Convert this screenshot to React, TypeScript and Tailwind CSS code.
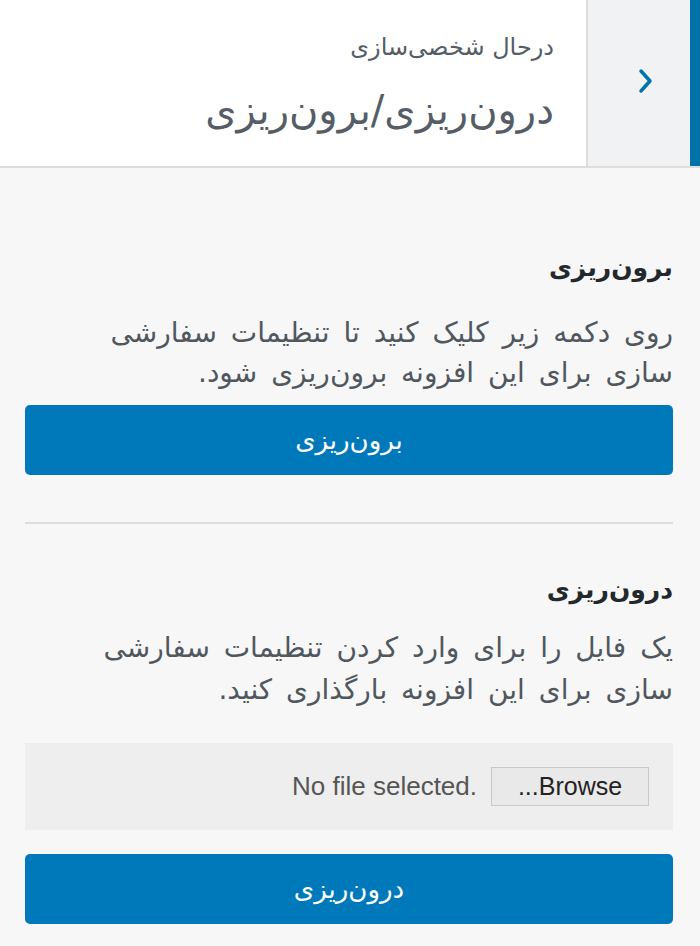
import React from "react";

const fa = { fontFamily: '"DejaVu Sans", "Noto Sans", sans-serif' };
const lat = { fontFamily: '"Liberation Sans", Arial, sans-serif' };

export default function App() {
  return (
    <div dir="rtl" className="w-[700px] h-[946px] bg-[#f7f7f7] overflow-hidden" style={fa}>
      <div className="flex h-[168px] bg-white border-b-2 border-[#dddddd]">
        <div className="w-[10px] bg-[#0073aa]" />
        <div className="w-[104px] bg-[#f1f2f4] border-l-2 border-[#dddddd] flex items-center justify-center pl-[14px]">
          <svg width="16" height="26" viewBox="0 0 16 26" className="mt-[-4px]">
            <path d="M3 3 L12 13 L3 23" stroke="#0073aa" strokeWidth="3.5" fill="none" strokeLinecap="round" strokeLinejoin="round" />
          </svg>
        </div>
        <div className="flex-1 pr-[32px] pt-[32px]">
          <div className="text-[24px] leading-[30px] text-[#555d66]">درحال شخصی‌سازی</div>
          <div className="text-[40px] leading-[50px] mt-[23px] text-[#555d66]">درون‌ریزی/برون‌ریزی</div>
        </div>
      </div>

      <div className="pr-[27px] pl-[25px]">
        <div className="pt-[85px] text-[25px] leading-[30px] font-bold text-[#23282d]">برون‌ریزی</div>
        <p className="mt-[30px] text-[28px] leading-[40px] text-[#50575e] [word-spacing:5px] whitespace-nowrap">
          روی دکمه زیر کلیک کنید تا تنظیمات سفارشی
          <br />
          سازی برای این افزونه برون‌ریزی شود.
        </p>
        <button className="mt-[12px] w-full h-[70px] rounded-[5px] bg-[#0079bb] text-white text-[26px]" style={fa}>
          برون‌ریزی
        </button>
        <div className="mt-[47px] h-[2px] bg-[#dddddd]" />
        <div className="mt-[51px] text-[25px] leading-[30px] font-bold text-[#23282d]">درون‌ریزی</div>
        <p className="mt-[22px] text-[28px] leading-[42px] text-[#50575e] [word-spacing:5px] whitespace-nowrap">
          یک فایل را برای وارد کردن تنظیمات سفارشی
          <br />
          سازی برای این افزونه بارگذاری کنید.
        </p>
        <div className="mt-[32px] h-[87px] bg-[#eeeeee] flex items-center pr-[24px] gap-[14px]">
          <div className="w-[158px] h-[39px] bg-[#e9e9e9] border border-[#c8c8c8] flex items-center justify-center text-[25px] text-[#222]" style={lat}>
            Browse...
          </div>
          <div dir="ltr" className="text-[26px] text-[#555]" style={lat}>No file selected.</div>
        </div>
        <button className="mt-[24px] w-full h-[70px] rounded-[5px] bg-[#0079bb] text-white text-[26px]" style={fa}>
          درون‌ریزی
        </button>
      </div>
    </div>
  );
}
